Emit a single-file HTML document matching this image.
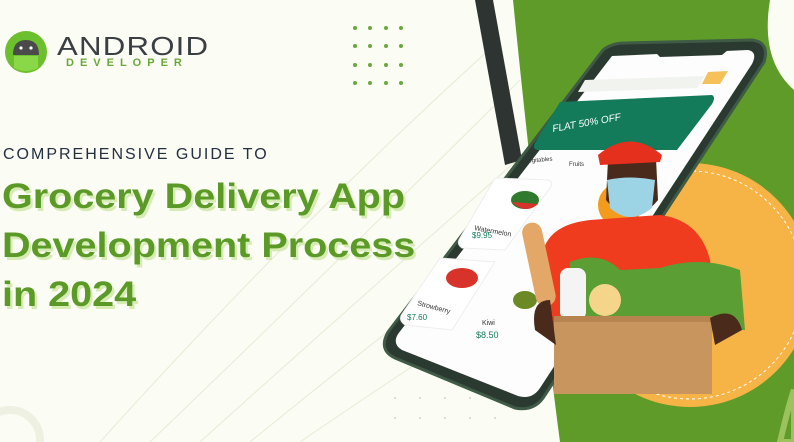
<!DOCTYPE html>
<html><head><meta charset="utf-8"><style>
html,body{margin:0;width:794px;height:442px;overflow:hidden}
body{background:#fbfcf3;font-family:"Liberation Sans",sans-serif;position:relative}
.t{position:absolute;left:0;white-space:nowrap}
</style></head><body>
<svg width="794" height="442" style="position:absolute;left:0;top:0">
<g fill="none" stroke="#e9eedb" stroke-width="1.2">
<path d="M150 442 Q350 250 520 80"/><path d="M200 442 Q380 280 540 140"/><path d="M250 442 Q400 320 520 230"/><path d="M100 442 Q300 220 500 40"/>
<path d="M300 442 Q420 360 500 310"/>
</g>
<circle cx="10" cy="440" r="30" fill="none" stroke="#eef1e2" stroke-width="8"/>
<g fill="#6aa83a">
<circle cx="355" cy="28" r="2"/><circle cx="370" cy="28" r="2"/><circle cx="386" cy="28" r="2"/><circle cx="401" cy="28" r="2"/>
<circle cx="355" cy="46" r="2"/><circle cx="370" cy="46" r="2"/><circle cx="386" cy="46" r="2"/><circle cx="401" cy="46" r="2"/>
<circle cx="355" cy="65" r="2"/><circle cx="370" cy="65" r="2"/><circle cx="386" cy="65" r="2"/><circle cx="401" cy="65" r="2"/>
<circle cx="355" cy="83" r="2"/><circle cx="370" cy="83" r="2"/><circle cx="386" cy="83" r="2"/><circle cx="401" cy="83" r="2"/>
</g>
<polygon points="475,0 493,0 522,160 505,165" fill="#2e3431"/>
<path d="M513 0 L794 0 L794 442 L560 442 Q545 330 540 250 Q525 120 513 0Z" fill="#5f9b29"/>
<path d="M794 0 L770 0 Q760 60 794 90Z" fill="#fbfcf3"/>
<path d="M780 442 Q790 400 794 390 L794 442Z" fill="none" stroke="#9cc25e" stroke-width="6"/>
<circle cx="690" cy="285" r="122" fill="#f7b446"/>
<circle cx="690" cy="285" r="114" fill="none" stroke="#fff" stroke-width="1" stroke-dasharray="3 3"/>
<path d="M603 50 Q612 43 625 43 L752 40 Q770 42 764 62 L545 395 Q535 412 515 408 L395 358 Q378 350 388 332 Z" fill="#2b3a30" stroke="#3f5a45" stroke-width="3" stroke-linejoin="round"/>
<path d="M612 56 L748 50 Q758 52 752 64 L540 388 Q532 400 518 396 L402 350 Q392 344 398 334 Z" fill="#fdfdfd"/>
<path d="M655 52 L728 50 L722 55 L660 57Z" fill="#2b3a30"/>
<path d="M585 80 L705 76 L697 88 L578 92Z" fill="#f1f3ef"/>
<path d="M708 72 L728 71 L720 84 L702 84Z" fill="#f6c05a"/>
<path d="M560 102 L712 95 Q716 97 712 104 L677 150 L537 150 Q532 148 535 143Z" fill="#137a5a"/>
<text x="553" y="132" fill="#fff" font-size="10" font-style="italic" transform="rotate(-10 553 132)">FLAT 50% OFF</text>
<text x="525" y="163" font-size="6" fill="#333" transform="rotate(-5 525 163)">Vegitables</text>
<text x="569" y="166" font-size="6" fill="#333">Fruits</text>
<path d="M495 178 L548 180 Q554 182 550 188 L505 250 L462 248 Q456 244 460 238Z" fill="#fff" stroke="#eee"/>
<ellipse cx="525" cy="200" rx="14" ry="9" fill="#2f7a2c"/><path d="M512 202 Q525 215 538 204Z" fill="#d8332a"/>
<text x="474" y="230" font-size="7" fill="#333" transform="rotate(10 474 230)">Watermelon</text>
<text x="472" y="238" font-size="8" fill="#137a5a">$9.95</text>
<path d="M440 258 L495 262 L452 330 L405 325 Q398 320 402 314Z" fill="#fff" stroke="#eee"/>
<ellipse cx="462" cy="278" rx="16" ry="10" fill="#d8332a"/>
<text x="417" y="305" font-size="7" fill="#333" transform="rotate(15 417 305)">Strowberry</text>
<text x="407" y="320" font-size="8" fill="#137a5a">$7.60</text>
<ellipse cx="525" cy="300" rx="12" ry="9" fill="#6b8a25"/>
<text x="482" y="325" font-size="7" fill="#333">Kiwi</text>
<text x="476" y="338" font-size="9" fill="#137a5a">$8.50</text>
<circle cx="620" cy="205" r="22" fill="#f29b1d"/>
<path d="M542 258 Q545 225 590 220 L660 215 Q700 220 710 260 L720 330 L540 330Z" fill="#ef3b1e"/>
<path d="M608 160 Q630 138 656 158 L658 200 Q632 232 606 200Z" fill="#4a2a1b"/>
<path d="M598 155 Q630 128 662 155 L660 162 L600 165Z" fill="#e5301d"/>
<path d="M607 180 Q630 175 655 180 L652 208 Q630 226 610 208Z" fill="#9cd3e5"/>
<rect x="528" y="222" width="20" height="85" rx="10" fill="#e3a868" transform="rotate(-12 538 260)"/>
<path d="M570 262 Q600 250 620 270 L660 268 Q700 255 740 270 L745 330 L570 330Z" fill="#5a9e34"/>
<circle cx="605" cy="300" r="16" fill="#f5d58a"/>
<rect x="560" y="268" width="26" height="52" rx="8" fill="#f4f4f4"/>
<rect x="554" y="316" width="158" height="78" fill="#c8955f"/>
<rect x="554" y="316" width="158" height="6" fill="#b7844f"/>
<path d="M535 330 Q530 300 550 300 L556 345Z M710 318 Q735 305 742 330 L715 345Z" fill="#4a2a1b"/>
<g fill="#cfd6c6"><circle cx="395" cy="398" r="1"/><circle cx="420" cy="398" r="1"/><circle cx="445" cy="398" r="1"/><circle cx="470" cy="398" r="1"/><circle cx="395" cy="418" r="1"/><circle cx="420" cy="418" r="1"/><circle cx="445" cy="418" r="1"/><circle cx="470" cy="418" r="1"/><circle cx="495" cy="418" r="1"/></g>
<circle cx="26" cy="52" r="21" fill="#6cbf2d"/>
<path d="M13 55 Q13 40 26 40 Q39 40 39 55Z" fill="#4a4a4a"/>
<circle cx="21" cy="48" r="1.6" fill="#fff"/><circle cx="31" cy="48" r="1.6" fill="#fff"/>
<path d="M14 56 L38 56 L38 68 Q26 74 14 68Z" fill="#8ad848"/>
</svg>
<div class="t" style="left:57px;top:31px;font-size:26px;letter-spacing:1px;color:#3a3f44;transform:scaleX(1.2);transform-origin:left">ANDROID</div>
<div class="t" style="left:66px;top:57px;font-size:11px;font-weight:bold;letter-spacing:6px;color:#6aa83a">DEVELOPER</div>
<div class="t" style="left:3px;top:146px;font-size:16px;letter-spacing:2px;color:#233040">COMPREHENSIVE GUIDE TO</div>
<div class="t" style="left:2px;top:172px;font-size:35px;font-weight:bold;line-height:49px;color:#5b9a26;text-shadow:2px 3px 0 #d6ecb4;transform:scaleX(1.13);transform-origin:left">Grocery Delivery App<br>Development Process<br>in 2024</div>
</body></html>
